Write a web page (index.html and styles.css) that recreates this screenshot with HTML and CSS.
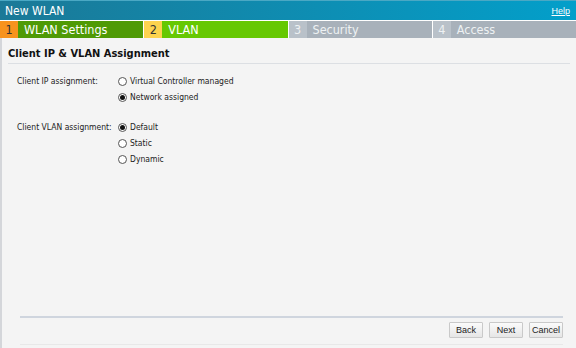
FILE: index.html
```html
<!DOCTYPE html>
<html lang="en">
<head>
    <meta charset="UTF-8">
    <title>New WLAN</title>
    <link rel="stylesheet" href="styles.css">
</head>
<body>
    <div class="dialog">
        <div class="titlebar">
            <span class="title">New WLAN</span>
            <a href="#" class="help">Help</a>
        </div>

        <div class="steps">
            <div class="step done"><span class="num">1</span><span class="label">WLAN Settings</span></div>
            <div class="step current"><span class="num">2</span><span class="label">VLAN</span></div>
            <div class="step"><span class="num">3</span><span class="label">Security</span></div>
            <div class="step"><span class="num">4</span><span class="label">Access</span></div>
        </div>

        <div class="content">
            <h2 class="section-title">Client IP &amp; VLAN Assignment</h2>

            <div class="field">
                <div class="field-label">Client IP assignment:</div>
                <div class="options">
                    <label class="option"><span class="radio"></span>Virtual Controller managed</label>
                    <label class="option"><span class="radio checked"></span>Network assigned</label>
                </div>
            </div>

            <div class="field">
                <div class="field-label">Client VLAN assignment:</div>
                <div class="options">
                    <label class="option"><span class="radio checked"></span>Default</label>
                    <label class="option"><span class="radio"></span>Static</label>
                    <label class="option"><span class="radio"></span>Dynamic</label>
                </div>
            </div>
        </div>

        <div class="footer">
            <button class="btn">Back</button>
            <button class="btn">Next</button>
            <button class="btn">Cancel</button>
        </div>
    </div>
</body>
</html>
```

FILE: styles.css
```css
/* General reset */
* {
    margin: 0;
    padding: 0;
    box-sizing: border-box;
}

body {
    background-color: #f4f4f4;
    font-family: "DejaVu Sans Condensed", "DejaVu Sans", sans-serif;
    color: #222;
}

.dialog {
    height: 348px;
    display: flex;
    flex-direction: column;
    border-left: 2px solid #d4d6da;
}

/* Title bar */
.titlebar {
    height: 20px;
    margin-left: -2px;
    background: linear-gradient(to right, #1b7997, #039fca);
    border-top: 1px solid #4aa8c4;
    display: flex;
    justify-content: space-between;
    align-items: center;
    padding: 0 6px 0 5px;
}

.title {
    color: #fff;
    font-size: 12px;
}

.help {
    color: #fff;
    font-size: 9px;
    font-family: "Liberation Sans", Arial, sans-serif;
}

/* Wizard steps */
.steps {
    display: flex;
    gap: 1px;
    margin-left: -2px;
    background-color: #fff;
    padding-top: 1px;
    height: 18px;
    font-size: 12.5px;
}

.step {
    flex: 1;
    display: flex;
    background-color: #a8b1ba;
    color: #eef1f3;
}

.step .num {
    width: 18px;
    text-align: center;
    background-color: #b9c1c9;
    line-height: 17px;
}

.step .label {
    padding-left: 6px;
    line-height: 17px;
}

.step.done {
    background-color: #4f9a05;
    color: #fff;
}

.step.done .num {
    background-color: #f7931e;
    color: #333;
}

.step.current {
    background-color: #66c802;
    color: #fff;
}

.step.current .num {
    background-color: #fdd34f;
    color: #333;
}

/* Form area */
.content {
    flex: 1;
    padding: 9px 6px 0 6px;
}

.section-title {
    font-size: 11px;
    font-weight: bold;
    color: #111;
    padding-bottom: 3px;
    border-bottom: 1px solid #dcdfe3;
    margin-bottom: 9px;
}

.field {
    display: flex;
    font-size: 8.5px;
    margin-bottom: 14px;
    padding-left: 9px;
}

.field-label {
    width: 101px;
    line-height: 16px;
}

.options {
    display: flex;
    flex-direction: column;
}

.option {
    display: flex;
    align-items: center;
    height: 16px;
}

.radio {
    width: 9px;
    height: 9px;
    border: 1px solid #555;
    border-radius: 50%;
    background-color: #fff;
    margin-right: 3px;
    display: flex;
    align-items: center;
    justify-content: center;
}

.radio.checked::after {
    content: "";
    width: 5px;
    height: 5px;
    border-radius: 50%;
    background-color: #111;
}

/* Footer buttons */
.footer {
    margin: 0 13px 3px 18px;
    border-top: 2px solid #cfd5de;
    padding-top: 4px;
    display: flex;
    justify-content: flex-end;
    gap: 6px;
    height: 29px;
    border-bottom: 1px solid #e8e8e8;
}

.btn {
    width: 34px;
    height: 16px;
    font-family: "Liberation Sans", Arial, sans-serif;
    font-size: 9px;
    color: #222;
    background: linear-gradient(#fbfbfb, #e6e6e6);
    border: 1px solid #c9c9c9;
    border-radius: 1px;
}
```
